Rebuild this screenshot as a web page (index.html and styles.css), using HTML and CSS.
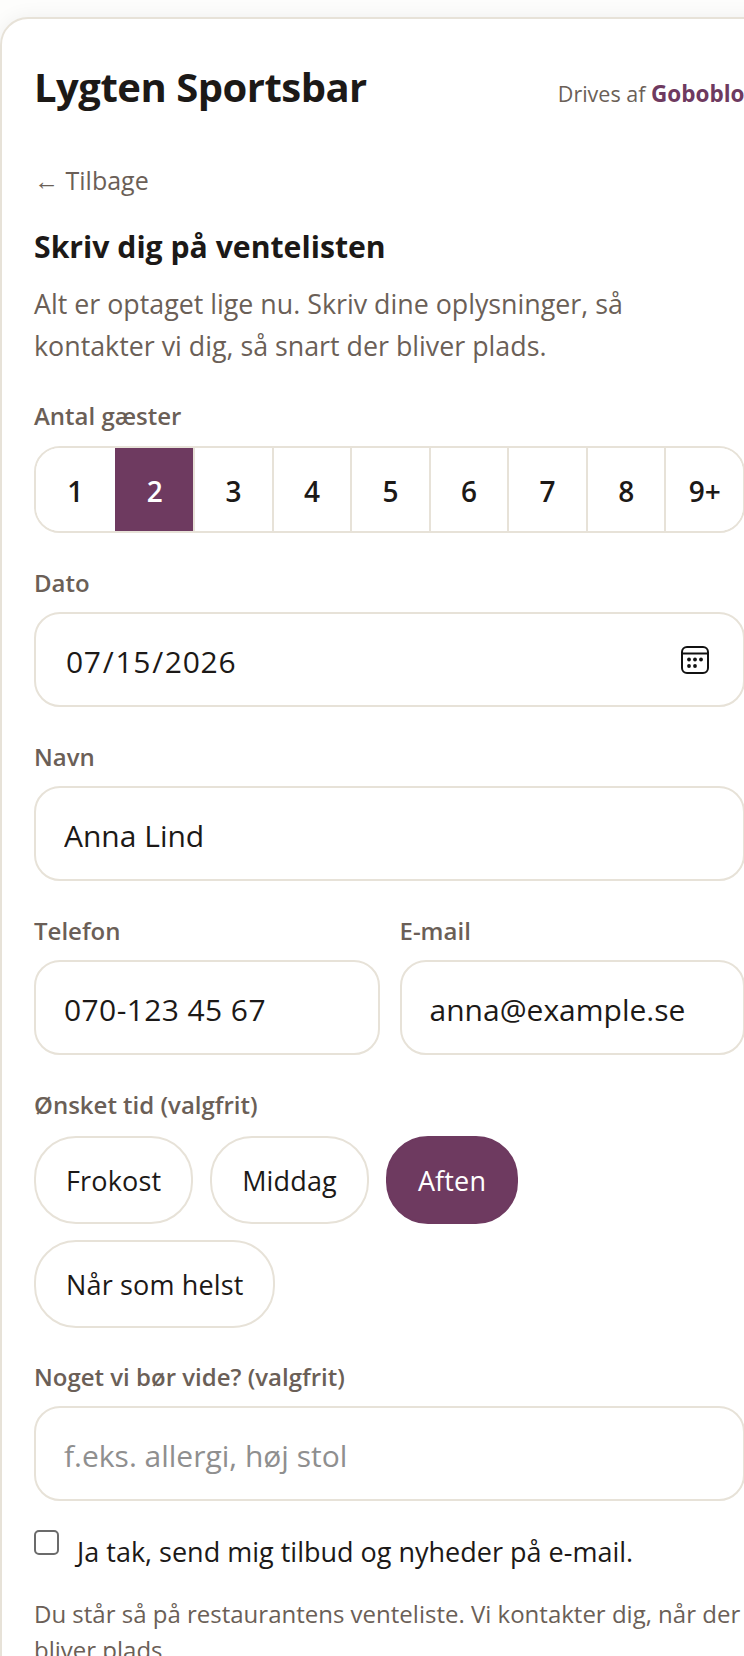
FILE: index.html
```html
<!DOCTYPE html>
<html lang="en">
<head>
    <meta charset="UTF-8">
    <meta name="viewport" content="width=device-width, initial-scale=1.0">
    <title>Lygten Sportsbar - Venteliste</title>
    <link rel="stylesheet" href="styles.css">
</head>
<body>
    <main class="card">
        <header class="top">
            <h1>Lygten Sportsbar</h1>
            <p class="powered">Drives af <strong>Goboblo</strong></p>
        </header>
        <form class="form">
            <a class="back" href="#">← Tilbage</a>
            <h2>Skriv dig på ventelisten</h2>
            <p class="intro">Alt er optaget lige nu. Skriv dine oplysninger, så kontakter vi dig, så snart der bliver plads.</p>

            <div class="field">
                <label>Antal gæster</label>
                <div class="guests">
                    <button type="button">1</button>
                    <button type="button" class="on">2</button>
                    <button type="button">3</button>
                    <button type="button">4</button>
                    <button type="button">5</button>
                    <button type="button">6</button>
                    <button type="button">7</button>
                    <button type="button">8</button>
                    <button type="button">9+</button>
                </div>
            </div>

            <div class="field">
                <label for="dato">Dato</label>
                <div class="date-wrap">
                    <input id="dato" type="date" value="2026-07-15">
                    <svg class="cal" viewBox="0 0 28 28" width="28" height="28" aria-hidden="true">
                        <rect x="1" y="1" width="26" height="26" rx="5" fill="none" stroke="#111" stroke-width="2"></rect>
                        <path d="M1 7.5h26" stroke="#111" stroke-width="2"></path>
                        <circle cx="8" cy="13.5" r="1.9" fill="#111"></circle>
                        <circle cx="14" cy="13.5" r="1.9" fill="#111"></circle>
                        <circle cx="20" cy="13.5" r="1.9" fill="#111"></circle>
                        <circle cx="8" cy="20" r="1.9" fill="#111"></circle>
                        <circle cx="14" cy="20" r="1.9" fill="#111"></circle>
                    </svg>
                </div>
            </div>

            <div class="field">
                <label for="navn">Navn</label>
                <input id="navn" type="text" value="Anna Lind">
            </div>

            <div class="two">
                <div class="field">
                    <label for="tlf">Telefon</label>
                    <input id="tlf" type="tel" value="070-123 45 67">
                </div>
                <div class="field">
                    <label for="mail">E-mail</label>
                    <input id="mail" type="email" value="anna@example.se">
                </div>
            </div>

            <div class="field">
                <label>Ønsket tid (valgfrit)</label>
                <div class="chips">
                    <button type="button">Frokost</button>
                    <button type="button">Middag</button>
                    <button type="button" class="on">Aften</button>
                    <button type="button">Når som helst</button>
                </div>
            </div>

            <div class="field note">
                <label for="note">Noget vi bør vide? (valgfrit)</label>
                <input id="note" type="text" placeholder="f.eks. allergi, høj stol">
            </div>

            <label class="optin"><input type="checkbox"><span>Ja tak, send mig tilbud og nyheder på e-mail.</span></label>

            <p class="small">Du står så på restaurantens venteliste. Vi kontakter dig, når der bliver plads.</p>
        </form>
    </main>
</body>
</html>
```

FILE: styles.css
```css
html, body { margin: 0; height: 100%; overflow: hidden; }
body { font-family: "Open Sans", "Noto Sans", sans-serif; background-color: #fdfdfc; color: #1c1917; padding-top: 17px; box-sizing: border-box; }
button, input { font-family: inherit; color: inherit; }

.card { width: 860px; box-sizing: border-box; background-color: #fff; border: 2px solid #e7e2d8; border-radius: 28px; padding: 32px; box-shadow: 0 0 20px rgba(0, 0, 0, .06); }
.top { display: flex; align-items: center; gap: 191px; height: 70px; }
h1 { margin: 0; font-size: 40px; font-weight: 700; letter-spacing: -.5px; white-space: nowrap; }
.powered { margin: 15px 0 0; font-size: 21.5px; color: #6b5f57; white-space: nowrap; }
.powered strong { font-size: 22.5px; color: #6e3a60; }

.form { width: 711px; display: flex; flex-direction: column; }
.back { margin-top: 41px; font-size: 25px; line-height: 36px; color: #6b5f57; text-decoration: none; }
h2 { margin: 30px 0 0; font-size: 30.2px; line-height: 38px; font-weight: 700; }
.intro { margin: 17px 0 -1px; font-size: 26.8px; line-height: 42px; color: #6b5f57; }

.field { display: flex; flex-direction: column; margin-top: 33px; }
.field label { font-size: 24px; line-height: 34px; font-weight: 600; color: #6b5f57; margin-bottom: 12px; }
.field input { height: 95px; box-sizing: border-box; width: 100%; background-color: #fff; border: 2px solid #e7e2d8; border-radius: 26px; padding: 3px 28px 0; font-size: 30px; outline: none; }
.field input::placeholder { color: #8f8f8f; }
.field input[type="tel"] { letter-spacing: .4px; }
.note { margin-top: 32px; }

.date-wrap { position: relative; }
.field input[type="date"] { letter-spacing: .7px; padding-left: 29px; }
.field input[type="date"]::-webkit-calendar-picker-indicator { opacity: 0; width: 28px; height: 28px; padding: 0; margin: 0; }
.cal { position: absolute; right: 36px; top: 34px; pointer-events: none; }

.guests { display: grid; grid-template-columns: repeat(9, 1fr); height: 87px; margin-top: 1px; box-sizing: border-box; border: 2px solid #e7e2d8; border-radius: 26px; overflow: hidden; }
.guests button { border: 0; border-left: 2px solid #e7e2d8; background: #fff; font-size: 28px; font-weight: 600; padding: 3px 0 0; }
.guests button:first-child { border-left: 0; }
.guests button.on { background-color: #6e3a60; border-left-color: #6e3a60; color: #fff; }

.two { display: grid; grid-template-columns: 1fr 1fr; gap: 20px; }

.chips { display: flex; flex-wrap: wrap; gap: 16px 17px; margin-top: 2px; }
.chips button { height: 88px; padding: 0 30px; background: #fff; border: 2px solid #e7e2d8; border-radius: 42px; font-size: 27px; letter-spacing: .15px; }
.chips button.on { background-color: #6e3a60; border-color: #6e3a60; color: #fff; }

.optin { display: flex; align-items: flex-start; gap: 18px; margin-top: 29px; font-size: 27px; line-height: 40px; }
.optin input { appearance: none; width: 25px; height: 25px; margin: 0; flex: none; box-sizing: border-box; background: #fff; border: 2px solid #6b6b6b; border-radius: 5px; }
.optin span { margin-top: 2px; }

.small { margin: 24px 0 0; font-size: 24px; line-height: 36px; color: #6b5f57; }
```
